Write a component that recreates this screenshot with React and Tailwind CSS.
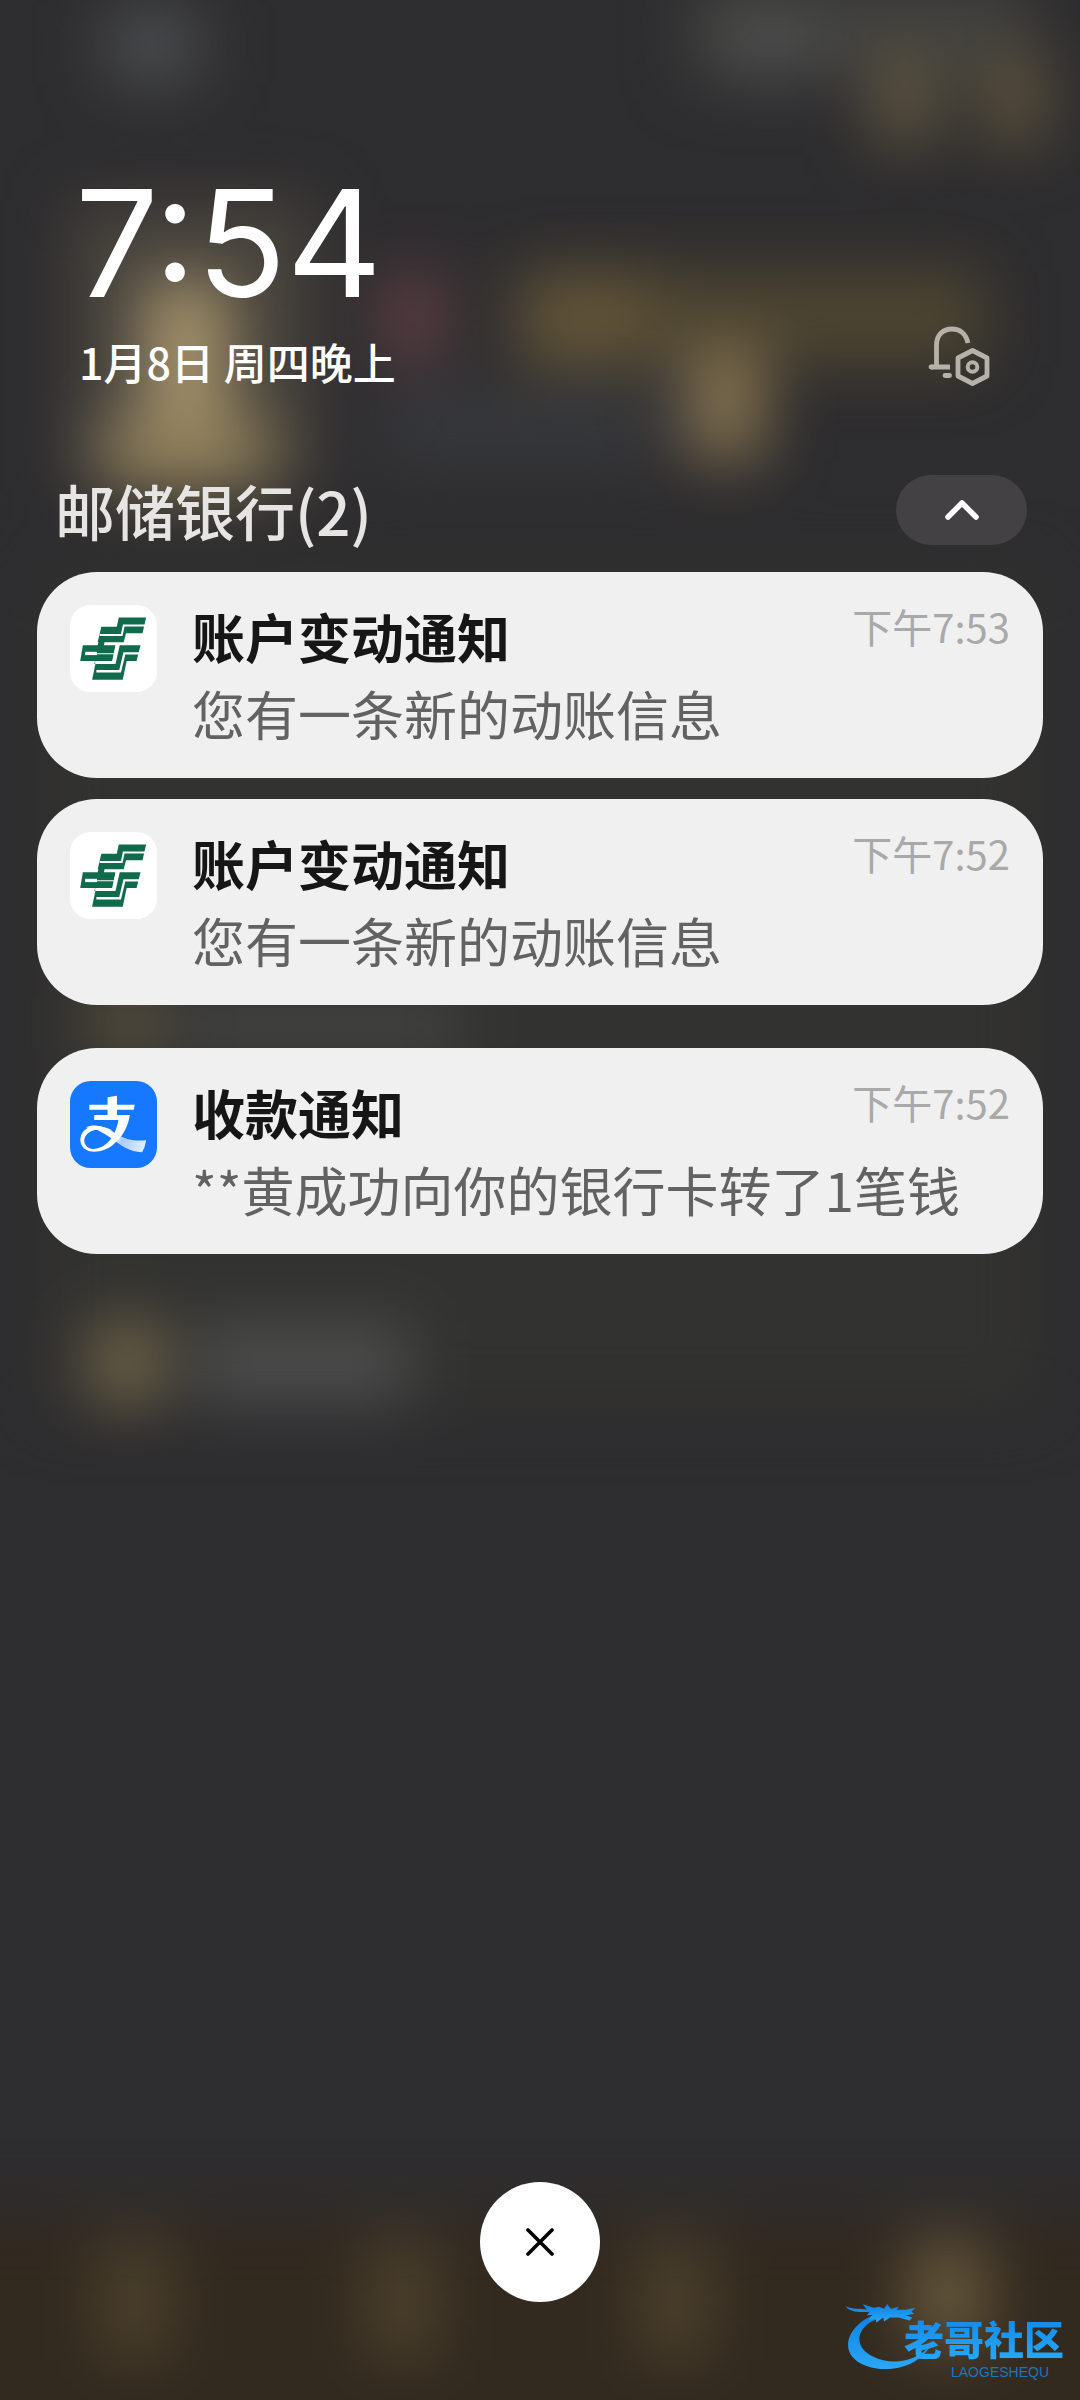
import React from "react";

const cjk = "font-['Noto_Sans_CJK_SC',sans-serif]";

const notificationGroup = [
  { id: 1, app: "postal", title: "账户变动通知", body: "您有一条新的动账信息", time: "下午7:53" },
  { id: 2, app: "postal", title: "账户变动通知", body: "您有一条新的动账信息", time: "下午7:52" },
];

const singles = [
  { id: 3, app: "alipay", title: "收款通知", body: "**黄成功向你的银行卡转了1笔钱", time: "下午7:52" },
];

function PostalIcon() {
  return (
    <svg viewBox="0 0 264 264" className="size-[87px] shrink-0" aria-hidden="true">
      <rect width="264" height="264" rx="62" fill="#fff" />
      <g transform="translate(-30 -43)">
        <g fill="#0f6b4c">
          <path d="M178 81H261L250 129H200L193 156H114L125 109H172Z" />
          <path d="M69 165H114L118 150H136L133 165H168L158 213H106L104 222H168L181 165H244L232 213H202L190 270H97L109 213H61Z" />
        </g>
        <g fill="none" stroke="#fff" strokeWidth="6">
          <path d="M120 134H187L193 105H258" />
          <path d="M76 190H112" strokeWidth="10" />
          <path d="M112 191H164" strokeWidth="3" />
          <path d="M174 158L162 217H106" strokeWidth="7" />
          <path d="M240 190H195L182 244H110" strokeWidth="7" />
        </g>
      </g>
    </svg>
  );
}

function AlipayIcon() {
  return (
    <svg viewBox="0 0 88 88" className="size-[87px] shrink-0" aria-hidden="true">
      <defs>
        <linearGradient id="ribbon" x1="40" y1="56" x2="77" y2="66" gradientUnits="userSpaceOnUse">
          <stop offset="0" stopColor="#fff" />
          <stop offset="0.35" stopColor="#a9ccff" />
          <stop offset="1" stopColor="#e6f1ff" />
        </linearGradient>
      </defs>
      <rect width="88" height="88" rx="21" fill="#1677ff" />
      <path
        d="M16 47C27 42 38 48 48 54C57 59 64 61 77 60Q76 67 73 72C60 72 51 65 42 58C32 51 24 47 16 47Z"
        fill="url(#ribbon)"
      />
      <path
        d="M38 16.500L47.500 15V24H65.500L64.500 29H47.500V34.500H60.500C59 46 53 57 43 65C34 72 21 74 14 68C8 62 10 52 17 48C27 43 36 47 43 50C39 50 32 48 25 49.500C16 51.500 12 59 16 65C20 71 30 69 36 64C43 59 47 50 49 39.500H24.500V34.500H38V29H19.500V24H38Z"
        fill="#fff"
      />
    </svg>
  );
}

function BellSettingsIcon() {
  return (
    <svg viewBox="0 0 62 60" className="h-[60px] w-[62px]" fill="none" stroke="#b6b2a9" strokeWidth="4.800" strokeLinecap="round" strokeLinejoin="round" aria-hidden="true">
      <path d="M3 41H22M8.500 41V19C8.500 9 15 3 24 3C32 3 38 8 40 17" strokeLinecap="butt" />
      <path d="M3 41H4M17 49.500H21.500" />
      <path d="M44.500 24.500L59 32V50L44.500 57.500L30 50V32Z" />
      <circle cx="44.500" cy="41" r="4.800" strokeWidth="4" />
    </svg>
  );
}

function NotificationCard({ item }) {
  return (
    <li className="flex items-start gap-[35px] rounded-[60px] bg-[#f0f0f0] px-[33px] py-[26px]">
      <div className="shrink-0 pt-[7px]">{item.app === "postal" ? <PostalIcon /> : <AlipayIcon />}</div>
      <div className="min-w-0 flex-1">
        <div className="flex items-start justify-between">
          <h3 className="text-[53px] leading-[76px] font-bold text-[#161616]">{item.title}</h3>
          <time className="text-[40px] leading-[56px] font-normal text-[#a9a9a9]">{item.time}</time>
        </div>
        <p className="text-[53px] leading-[78px] whitespace-nowrap text-[#626262]">{item.body}</p>
      </div>
    </li>
  );
}

/* Out-of-focus home screen seen through the shade. */
function Backdrop() {
  return (
    <svg viewBox="0 0 1080 2400" preserveAspectRatio="none" className="absolute inset-0 -z-10 size-full bg-[#2e2d2f]" aria-hidden="true">
      <defs>
        <filter id="soft" filterUnits="userSpaceOnUse" x="-100" y="-100" width="1280" height="2600" colorInterpolationFilters="sRGB">
          <feGaussianBlur stdDeviation="31" />
        </filter>
      </defs>
      <g filter="url(#soft)">
        <rect x="40" y="570" width="1000" height="840" fill="#323230" />
        <rect x="105" y="5" width="95" height="80" fill="#4a4c4e" />
        <rect x="690" y="-20" width="340" height="100" fill="#41413f" />
        <rect x="725" y="10" width="90" height="70" fill="#4e4e4e" />
        <rect x="870" y="50" width="70" height="95" fill="#5c533f" />
        <rect x="985" y="50" width="60" height="95" fill="#5e533c" />
        <rect x="70" y="200" width="245" height="290" fill="#47433d" />
        <rect x="142" y="280" width="88" height="210" fill="#a2906a" />
        <rect x="100" y="420" width="170" height="65" fill="#8f7f5a" />
        <rect x="380" y="275" width="65" height="85" fill="#5f3f45" />
        <rect x="515" y="270" width="470" height="95" fill="#4d4531" />
        <rect x="525" y="275" width="125" height="90" fill="#635538" />
        <rect x="380" y="385" width="280" height="80" fill="#37383b" />
        <rect x="685" y="345" width="80" height="115" fill="#82704f" />
        <rect x="95" y="995" width="65" height="55" fill="#625740" />
        <rect x="180" y="1000" width="280" height="50" fill="#464646" />
        <rect x="92" y="1322" width="70" height="82" fill="#736649" />
        <rect x="195" y="1322" width="215" height="82" fill="#4c4c4c" />
        <rect x="-100" y="2215" width="1280" height="385" fill="#32291f" />
        <rect x="98" y="2240" width="74" height="120" fill="#4c412c" />
        <rect x="365" y="2240" width="74" height="120" fill="#4c412c" />
        <rect x="638" y="2240" width="74" height="120" fill="#4c412c" />
        <rect x="908" y="2240" width="80" height="110" fill="#65573c" />
      </g>
    </svg>
  );
}

function CommunityLogo() {
  return (
    <div className="absolute right-4 bottom-5 flex items-end">
      <svg viewBox="0 0 92 72" className="-mr-[32px] mb-2 h-[70px] w-[92px]" aria-hidden="true">
        <defs>
          <linearGradient id="dragon" x1="0" y1="0" x2="0" y2="1">
            <stop offset="0" stopColor="#0f80e0" />
            <stop offset="1" stopColor="#2aa8f8" />
          </linearGradient>
        </defs>
        <g fill="url(#dragon)">
          <path d="M30 13C8 21-4 42 7 56C22 75 72 75 88 44C76 59 55 64 39 60C22 56 12 46 15 34C18 25 26 19 36 17Z" />
          <path d="M0 4C8 8 16 6 22 8L18 2L29 6L35 5L40 7L43 2L47 7L55 5L53 8L62 8L72 6L68 10L71 12L62 14L69 16L66 19L55 16L46 16L40 20L39 16L32 21L31 17L24 19L28 13L22 14L25 10C15 11 4 10 0 4Z" />
        </g>
      </svg>
      <div className="flex flex-col items-center">
        <span className="bg-gradient-to-b from-[#0f86ea] to-[#2aaaf8] bg-clip-text text-[40px] leading-[52px] font-black text-transparent">老哥社区</span>
        <span className="pl-8 font-['Liberation_Sans',sans-serif] text-[14px] leading-[16px] text-[#1b76bd]">LAOGESHEQU</span>
      </div>
    </div>
  );
}

export default function App() {
  return (
    <main lang="zh-CN" className={`relative isolate flex min-h-screen flex-col overflow-hidden px-[37px] pt-[168px] pb-[98px] ${cjk}`}>
      <Backdrop />

      <header className="flex items-end justify-between pr-[53px] pl-[42px]">
        <div className="text-white">
          <h1 className="-ml-1 font-['Inter',sans-serif] text-[148px] leading-[152px] font-normal">7:54</h1>
          <p className="mt-2 text-[43px] leading-[66px] font-medium">1月8日 周四晚上</p>
        </div>
        <button type="button" aria-label="通知设置" className="mb-2">
          <BellSettingsIcon />
        </button>
      </header>

      <section className="mt-[74px]">
        <div className="mb-[20px] flex items-center justify-between pr-4 pl-[18px]">
          <h2 className="text-[60px] leading-[84px] font-medium text-[#e7e5e3]">邮储银行(2)</h2>
          <button type="button" aria-label="收起" className="flex h-[70px] w-[131px] items-center justify-center rounded-full bg-[#434144]">
            <svg viewBox="0 0 34 20" className="h-[20px] w-[34px]" fill="none" stroke="#fff" strokeWidth="5.500" strokeLinecap="round" strokeLinejoin="round" aria-hidden="true">
              <path d="M3 17L17 3L31 17" />
            </svg>
          </button>
        </div>
        <ul className="flex flex-col gap-[21px]">
          {notificationGroup.map((item) => (
            <NotificationCard key={item.id} item={item} />
          ))}
        </ul>
      </section>

      <ul className="mt-[43px]">
        {singles.map((item) => (
          <NotificationCard key={item.id} item={item} />
        ))}
      </ul>

      <button type="button" aria-label="清除全部" className="mx-auto mt-auto flex size-[120px] items-center justify-center rounded-full bg-white">
        <svg viewBox="0 0 28 28" className="size-[28px]" fill="none" stroke="#000" strokeWidth="3.600" strokeLinecap="round" aria-hidden="true">
          <path d="M2 2L26 26M26 2L2 26" />
        </svg>
      </button>

      <CommunityLogo />
    </main>
  );
}
